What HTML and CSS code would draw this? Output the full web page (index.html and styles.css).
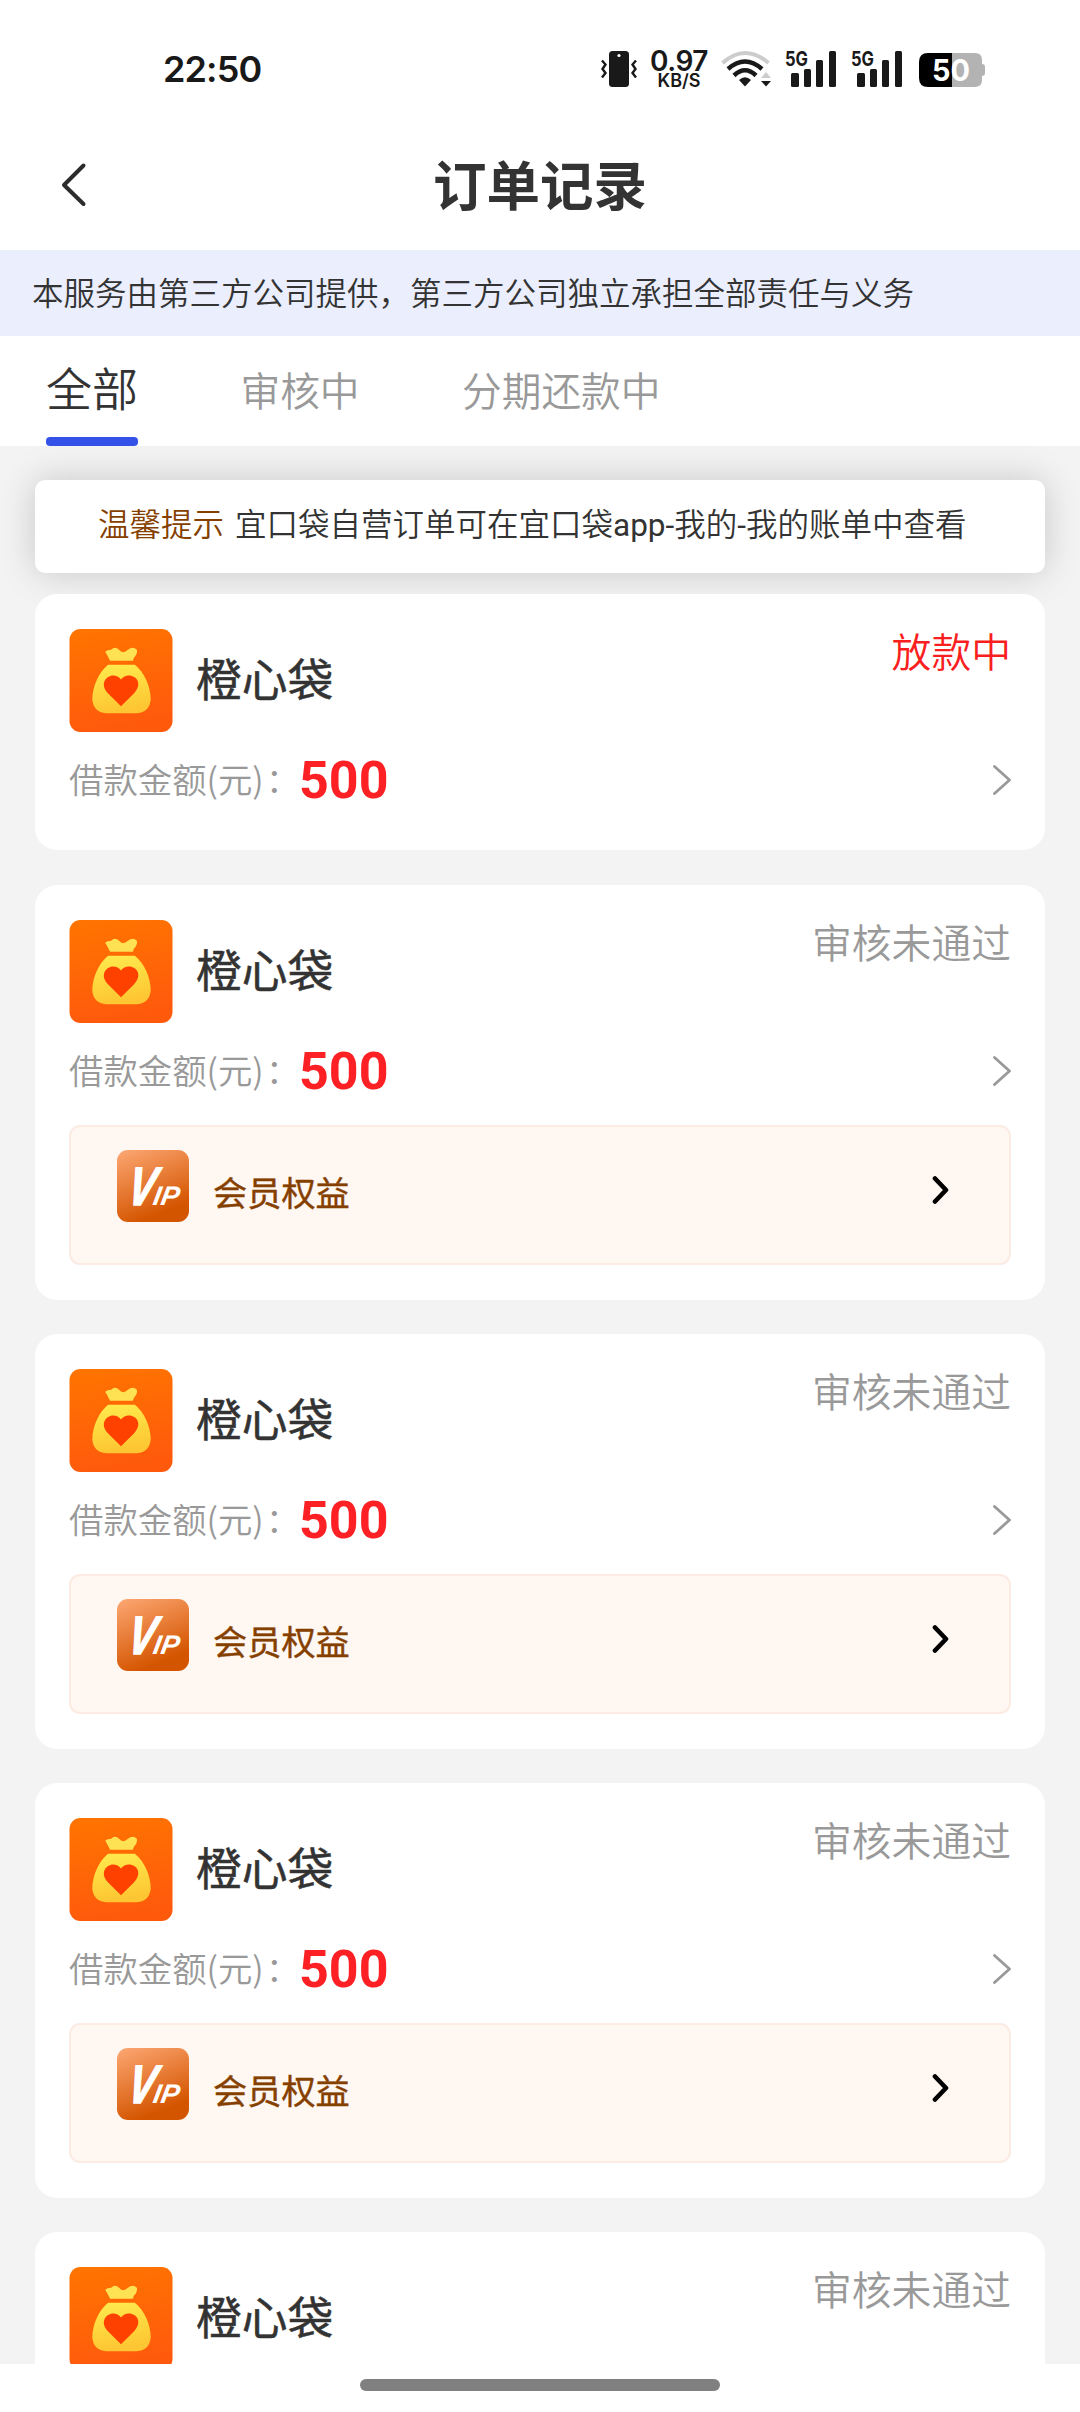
FILE: index.html
```html
<!DOCTYPE html>
<html lang="zh-CN">
<head>
    <meta charset="UTF-8">
    <meta name="viewport" content="width=device-width, initial-scale=1.0">
    <title>订单记录</title>
    <link rel="stylesheet" href="styles.css">
</head>
<body>
    <!-- iconos compartidos -->
    <svg class="sprite" width="0" height="0">
        <defs>
            <linearGradient id="orange" x1="0" y1="0" x2="0.2" y2="1">
                <stop offset="0" stop-color="#ff7500"/>
                <stop offset="1" stop-color="#ff5a0c"/>
            </linearGradient>
            <linearGradient id="gold" x1="0" y1="0" x2="0.2" y2="1">
                <stop offset="0" stop-color="#ffec4e"/>
                <stop offset="1" stop-color="#fdc632"/>
            </linearGradient>
            <linearGradient id="copper" x1="0.2" y1="0" x2="0.6" y2="1">
                <stop offset="0" stop-color="#faa26c"/>
                <stop offset="0.9" stop-color="#d45500"/>
            </linearGradient>
        </defs>
        <symbol id="bag" viewBox="0 0 104 104">
            <rect width="104" height="104" rx="11" fill="url(#orange)"/>
            <path d="M41 32 Q38 26 36 23 Q38 21 42 21 Q46 17 50 21 Q54 26 59 21 Q64 17 68 21 Q69 25 65 29 L64 32 Z" fill="#ffe154"/>
            <path d="M39 36 H66 C75 43 82 58 82 71 Q81 84 68 85 H37 Q24 84 23 71 C23 58 30 43 39 36 Z" fill="url(#gold)"/>
            <path d="M52 78 L39 65 C30 56 37 47 44 47 Q49 47 52 51 Q55 47 60 47 C68 47 74 56 65 65 Z" fill="#ff4100"/>
        </symbol>
        <symbol id="bars" viewBox="0 0 52 36">
            <rect x="6" y="22" width="8" height="14" rx="1.500"/>
            <rect x="19" y="18" width="7" height="18" rx="1.500"/>
            <rect x="31" y="9" width="7" height="27" rx="1.500"/>
            <rect x="44" y="0" width="7" height="36" rx="1.500"/>
        </symbol>
        <symbol id="arrow" viewBox="0 0 20 32">
            <path d="M3.500 2.500 L18.500 16 L3.500 29.500" fill="none" stroke="#999" stroke-width="2.800" stroke-linecap="round" stroke-linejoin="round"/>
        </symbol>
        <symbol id="arrow-bold" viewBox="0 0 18 28">
            <path d="M4 2.500 L15 14 L4 25.500" fill="none" stroke="#000" stroke-width="4.600" stroke-linecap="round" stroke-linejoin="round"/>
        </symbol>
    </svg>

    <div class="app">
        <div class="status-bar">
            <div class="time">22:50</div>
            <svg class="vibrate" width="36" height="36" viewBox="0 0 36 36">
                <rect x="8" y="0" width="20" height="36" rx="3.500" fill="#191919"/>
                <circle cx="18" cy="4.500" r="1.600" fill="#fff"/>
                <path d="M1 9.500 L4.500 13.500 L1.500 18 L4.500 22 L1 26.500 M35 9.500 L31.500 13.500 L34.500 18 L31.500 22 L35 26.500" fill="none" stroke="#191919" stroke-width="2.400"/>
            </svg>
            <div class="speed">
                <span class="speed-num">0.97</span>
                <span class="speed-unit">KB/S</span>
            </div>
            <svg class="wifi" width="50" height="36" viewBox="0 0 50 36">
                <path d="M1.500 12 Q24 -8 47.500 12" fill="none" stroke="#ccc" stroke-width="4"/>
                <path d="M7 18 Q24 3 41 18" fill="none" stroke="#191919" stroke-width="4.500"/>
                <path d="M13 24.500 Q24 14 35 24.500" fill="none" stroke="#191919" stroke-width="4.500"/>
                <path d="M18 29 Q24 23.500 30 29 L24 35.500 Z" fill="#191919"/>
                <path d="M40 27 L45 21 L50 27 Z" fill="#ccc"/>
                <path d="M40 30 L45 35.500 L50 30 Z" fill="#191919"/>
            </svg>
            <svg class="signal" width="52" height="36" viewBox="0 0 52 36">
                <use href="#bars"/>
                <text class="net-type" x="0" y="15" font-size="20" textLength="23" lengthAdjust="spacingAndGlyphs">5G</text>
            </svg>
            <svg class="signal" width="52" height="36" viewBox="0 0 52 36">
                <use href="#bars"/>
                <text class="net-type" x="0" y="15" font-size="20" textLength="23" lengthAdjust="spacingAndGlyphs">5G</text>
            </svg>
            <svg class="battery" width="67" height="36" viewBox="0 0 67 36">
                <path d="M33 2 H56 Q63 2 63 9 V13 Q66 13 66 16 V22 Q66 25 63 25 V29 Q63 36 56 36 H33 Z" fill="#b3b3b3"/>
                <path d="M33 2 H9 Q0 2 0 11 V27 Q0 36 9 36 H33 Z" fill="#000"/>
                <text class="battery-text" x="13" y="30" font-size="30" textLength="38" lengthAdjust="spacingAndGlyphs">50</text>
            </svg>
        </div>

        <div class="nav">
            <svg class="back" width="26" height="44" viewBox="0 0 26 44">
                <path d="M22.500 2.500 L3 22 L22.500 41" fill="none" stroke="#2c2c2c" stroke-width="4" stroke-linecap="round" stroke-linejoin="round"/>
            </svg>
            <h1>订单记录</h1>
        </div>

        <div class="notice">本服务由第三方公司提供，第三方公司独立承担全部责任与义务</div>

        <div class="tabs">
            <div class="tab active">全部</div>
            <div class="tab">审核中</div>
            <div class="tab">分期还款中</div>
        </div>

        <div class="content">
            <div class="tip"><span class="tip-label">温馨提示</span>宜口袋自营订单可在宜口袋<span class="latin">app-</span>我的<span class="latin">-</span>我的账单中查看</div>

            <div class="card first">
                <div class="card-top">
                    <svg class="logo" width="104" height="103"><use href="#bag"/></svg>
                    <span class="name">橙心袋</span>
                    <span class="status red">放款中</span>
                </div>
                <div class="card-row">
                    <span class="label">借款金额(元)<span class="colon">：</span></span>
                    <span class="amount">500</span>
                    <svg class="arrow" width="20" height="32"><use href="#arrow"/></svg>
                </div>
            </div>

            <div class="card">
                <div class="card-top">
                    <svg class="logo" width="104" height="103"><use href="#bag"/></svg>
                    <span class="name">橙心袋</span>
                    <span class="status">审核未通过</span>
                </div>
                <div class="card-row">
                    <span class="label">借款金额(元)<span class="colon">：</span></span>
                    <span class="amount">500</span>
                    <svg class="arrow" width="20" height="32"><use href="#arrow"/></svg>
                </div>
                <div class="vip">
                    <svg class="vip-icon" width="72" height="72" viewBox="0 0 72 72">
                        <rect width="72" height="72" rx="11" fill="url(#copper)"/>
                        <g class="vip-text" transform="translate(9 55) skewX(-10)">
                            <text class="vip-v" textLength="27" lengthAdjust="spacingAndGlyphs">V</text>
                            <text class="vip-ip" x="26" textLength="26" lengthAdjust="spacingAndGlyphs">IP</text>
                        </g>
                    </svg>
                    <span class="vip-name">会员权益</span>
                    <svg class="vip-arrow" width="18" height="28"><use href="#arrow-bold"/></svg>
                </div>
            </div>

            <div class="card">
                <div class="card-top">
                    <svg class="logo" width="104" height="103"><use href="#bag"/></svg>
                    <span class="name">橙心袋</span>
                    <span class="status">审核未通过</span>
                </div>
                <div class="card-row">
                    <span class="label">借款金额(元)<span class="colon">：</span></span>
                    <span class="amount">500</span>
                    <svg class="arrow" width="20" height="32"><use href="#arrow"/></svg>
                </div>
                <div class="vip">
                    <svg class="vip-icon" width="72" height="72" viewBox="0 0 72 72">
                        <rect width="72" height="72" rx="11" fill="url(#copper)"/>
                        <g class="vip-text" transform="translate(9 55) skewX(-10)">
                            <text class="vip-v" textLength="27" lengthAdjust="spacingAndGlyphs">V</text>
                            <text class="vip-ip" x="26" textLength="26" lengthAdjust="spacingAndGlyphs">IP</text>
                        </g>
                    </svg>
                    <span class="vip-name">会员权益</span>
                    <svg class="vip-arrow" width="18" height="28"><use href="#arrow-bold"/></svg>
                </div>
            </div>

            <div class="card">
                <div class="card-top">
                    <svg class="logo" width="104" height="103"><use href="#bag"/></svg>
                    <span class="name">橙心袋</span>
                    <span class="status">审核未通过</span>
                </div>
                <div class="card-row">
                    <span class="label">借款金额(元)<span class="colon">：</span></span>
                    <span class="amount">500</span>
                    <svg class="arrow" width="20" height="32"><use href="#arrow"/></svg>
                </div>
                <div class="vip">
                    <svg class="vip-icon" width="72" height="72" viewBox="0 0 72 72">
                        <rect width="72" height="72" rx="11" fill="url(#copper)"/>
                        <g class="vip-text" transform="translate(9 55) skewX(-10)">
                            <text class="vip-v" textLength="27" lengthAdjust="spacingAndGlyphs">V</text>
                            <text class="vip-ip" x="26" textLength="26" lengthAdjust="spacingAndGlyphs">IP</text>
                        </g>
                    </svg>
                    <span class="vip-name">会员权益</span>
                    <svg class="vip-arrow" width="18" height="28"><use href="#arrow-bold"/></svg>
                </div>
            </div>

            <div class="card">
                <div class="card-top">
                    <svg class="logo" width="104" height="103"><use href="#bag"/></svg>
                    <span class="name">橙心袋</span>
                    <span class="status">审核未通过</span>
                </div>
            </div>
        </div>

        <div class="home-bar"><div class="home-line"></div></div>
    </div>
</body>
</html>
```
FILE: styles.css
```css
* {
    box-sizing: border-box;
}
body {
    margin: 0;
    font-family: "Noto Sans CJK SC", sans-serif;
    font-weight: 350;
    color: #333;
    background-color: #fff;
}
svg {
    display: block;
    flex-shrink: 0;
    overflow: visible;
}
.sprite {
    position: absolute;
}
.app {
    width: 1080px;
    height: 2412px;
    display: flex;
    flex-direction: column;
    overflow: hidden;
}

/* barra de estado */
.status-bar {
    display: flex;
    align-items: flex-start;
    height: 130px;
    padding: 51px 0 0 163px;
    color: #191919;
    fill: #191919;
}
.time {
    width: 438px;
    font-family: Inter, sans-serif;
    font-size: 36px;
    font-weight: 600;
    line-height: 36px;
    letter-spacing: -0.9px;
}
.speed {
    width: 60px;
    margin: 0 12px;
    display: flex;
    flex-direction: column;
    align-items: center;
    font-family: Inter, sans-serif;
    font-weight: 600;
}
.speed-num {
    font-size: 28px;
    line-height: 21px;
    letter-spacing: -0.5px;
}
.speed-unit {
    font-size: 18px;
    line-height: 18px;
}
.wifi {
    margin-right: 14px;
}
.signal {
    margin-right: 14px;
}
.battery {
    margin-left: 2px;
}
.net-type {
    font-family: Inter, sans-serif;
    font-weight: 700;
}
.battery-text {
    font-family: Inter, sans-serif;
    font-weight: 700;
    fill: #fff;
}

/* cabecera */
.nav {
    display: flex;
    align-items: center;
    height: 120px;
    padding: 0 61px 10px;
}
.nav h1 {
    flex: 1;
    margin: 0 26px 4px 0;
    text-align: center;
    font-size: 53.500px;
    line-height: 60px;
    font-weight: 700;
}
.notice {
    height: 86px;
    padding-left: 32px;
    background-color: #ebeefd;
    font-size: 31.500px;
    line-height: 83px;
}
.tabs {
    display: flex;
    height: 110px;
    padding-left: 46px;
}
.tab {
    margin-right: 102.500px;
    font-size: 39.700px;
    line-height: 106px;
    color: #999;
}
.tab.active {
    position: relative;
    font-size: 46px;
    line-height: 101px;
    color: #333;
}
.tab.active::after {
    content: "";
    position: absolute;
    left: 0;
    top: 101px;
    width: 92px;
    height: 9px;
    border-radius: 4px;
    background-color: #3452e8;
}

/* lista */
.content {
    flex: 1;
    padding: 34px 35px 0;
    background-color: #f3f3f3;
    overflow: hidden;
}
.tip {
    height: 93px;
    margin-bottom: 21px;
    padding-left: 63px;
    border-radius: 10px;
    background-color: #fff;
    box-shadow: 0 0 36px rgba(0, 0, 0, 0.18);
    font-family: Roboto, "Noto Sans CJK SC", sans-serif;
    font-size: 31.500px;
    line-height: 92px;
    white-space: nowrap;
}
.tip-label {
    margin-right: 11px;
    color: #854000;
}
.latin {
    font-weight: 400;
}
.card {
    height: 415px;
    margin-bottom: 34px;
    padding: 35px 34px 0;
    border-radius: 22px;
    background-color: #fff;
}
.card.first {
    height: 256px;
    margin-bottom: 35px;
}
.card-top {
    display: flex;
    height: 103px;
}
.name {
    flex: 1;
    margin-left: 23px;
    font-size: 45.800px;
    font-weight: 400;
    line-height: 97px;
    -webkit-text-stroke: 0.5px;
}
.status {
    font-size: 39.800px;
    line-height: 41px;
    color: #999;
}
.status.red {
    color: #f91e20;
}
.card-row {
    display: flex;
    align-items: center;
    height: 96px;
}
.label {
    width: 230px;
    margin-top: -4px;
    font-size: 34.400px;
    color: #999;
    white-space: nowrap;
}
.colon {
    margin-left: 2px;
}
.amount {
    flex: 1;
    font-family: Roboto, sans-serif;
    font-size: 52px;
    font-weight: 700;
    color: #fd2024;
}
.vip {
    display: flex;
    height: 140px;
    margin-top: 6px;
    padding: 23px 60px 0 46px;
    border: 2px solid #fbebe2;
    border-radius: 11px;
    background-color: #fff7f1;
}
.vip-name {
    flex: 1;
    margin-left: 24px;
    font-size: 34.200px;
    font-weight: 400;
    line-height: 82px;
    color: #854000;
    -webkit-text-stroke: 0.4px;
}
.vip-arrow {
    margin-top: 26px;
}
.vip-text {
    font-family: "Liberation Sans", sans-serif;
    font-weight: 700;
    font-style: italic;
    fill: #fff;
}
.vip-v {
    font-size: 54px;
    stroke: #fff;
    stroke-width: 1.5px;
}
.vip-ip {
    font-size: 27px;
}
.home-bar {
    height: 48px;
    padding-top: 15px;
    background-color: #fff;
}
.home-line {
    width: 360px;
    height: 12px;
    margin: 0 auto;
    border-radius: 6px;
    background-color: #808080;
}
```
